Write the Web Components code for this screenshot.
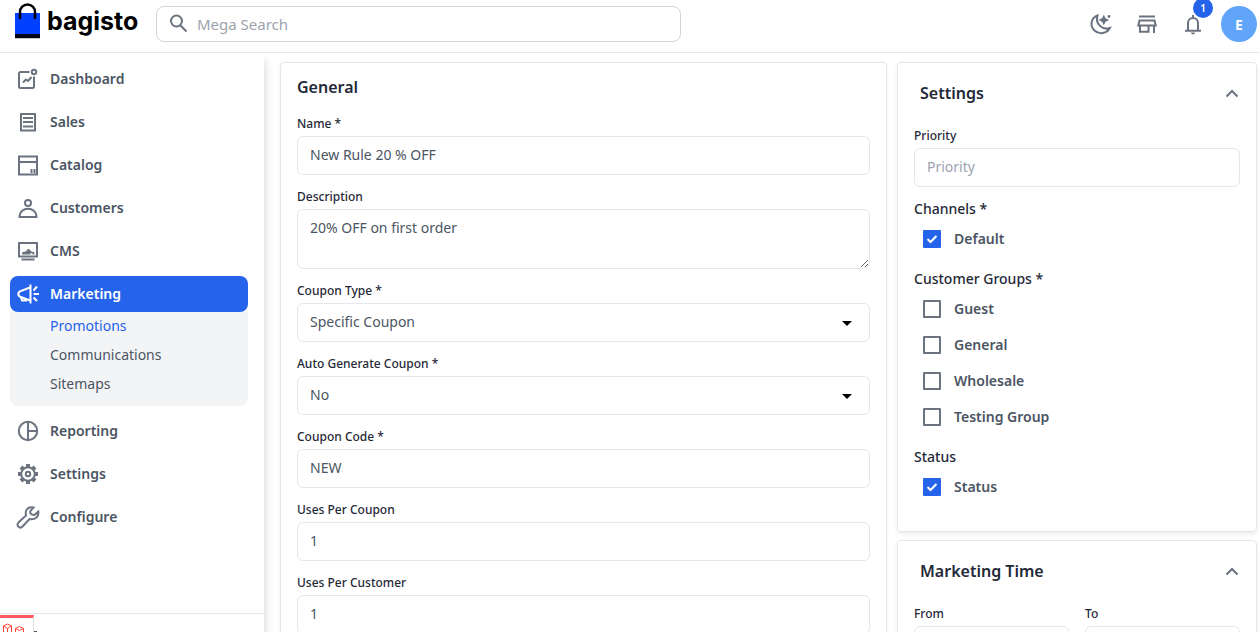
<!DOCTYPE html>
<html lang="en">
<head>
<meta charset="utf-8">
<title>Edit Cart Rule</title>
<style>
  html, body { margin: 0; height: 100%; }
  body { font-family: "Noto Sans", sans-serif; font-size: 14px; color: #4b5563; background: #fff; }
</style>
</head>
<body>
<admin-shell>
  <admin-header slot="header"></admin-header>
  <admin-sidebar slot="sidebar">
    <nav-item icon="dashboard">Dashboard</nav-item>
    <nav-item icon="sales">Sales</nav-item>
    <nav-item icon="catalog">Catalog</nav-item>
    <nav-item icon="customers">Customers</nav-item>
    <nav-item icon="cms">CMS</nav-item>
    <nav-item icon="marketing" active>Marketing
      <nav-sub slot="sub" active>Promotions</nav-sub>
      <nav-sub slot="sub">Communications</nav-sub>
      <nav-sub slot="sub">Sitemaps</nav-sub>
    </nav-item>
    <nav-item icon="reporting">Reporting</nav-item>
    <nav-item icon="settings">Settings</nav-item>
    <nav-item icon="configure">Configure</nav-item>
  </admin-sidebar>
  <form-card heading="General">
    <form-field label="Name *" value="New Rule 20 % OFF"></form-field>
    <form-field label="Description" kind="textarea" value="20% OFF on first order"></form-field>
    <form-field label="Coupon Type *" kind="select" options="Specific Coupon|No Coupon"></form-field>
    <form-field label="Auto Generate Coupon *" kind="select" options="No|Yes"></form-field>
    <form-field label="Coupon Code *" value="NEW"></form-field>
    <form-field label="Uses Per Coupon" value="1"></form-field>
    <form-field label="Uses Per Customer" value="1"></form-field>
  </form-card>
  <accordion-card slot="aside" heading="Settings">
    <form-field label="Priority" placeholder="Priority"></form-field>
    <check-group heading="Channels *"><check-row checked label="Default"></check-row></check-group>
    <check-group heading="Customer Groups *">
      <check-row label="Guest"></check-row>
      <check-row label="General"></check-row>
      <check-row label="Wholesale"></check-row>
      <check-row label="Testing Group"></check-row>
    </check-group>
    <check-group heading="Status"><check-row checked label="Status"></check-row></check-group>
  </accordion-card>
  <accordion-card slot="aside" heading="Marketing Time">
    <field-pair>
      <form-field label="From"></form-field>
      <form-field label="To"></form-field>
    </field-pair>
  </accordion-card>
  <debug-bar slot="overlay"></debug-bar>
</admin-shell>

<script>
const ICONS = {
  dashboard: '<path d="M13.500 5H4.500Q3 5 3 6.500V19.500Q3 21 4.500 21H16.500Q18 21 18 19.500V9.500"/><path d="M7 15.500l3-3 2 1.500 3.500-4"/><circle cx="18" cy="5" r="2.200"/>',
  sales: '<path d="M5 4h14v16.500H5zM7 8h10M7 12h10M7 16.500h10"/>',
  catalog: '<path d="M3 3.500h18v18H3zM3 9h18M15.500 16v4M18.500 16v4"/>',
  customers: '<circle cx="12" cy="7" r="3"/><path d="M3.500 21c0-11 17-11 17 0z"/>',
  cms: '<path d="M3 4h18v13.500H3zM5.500 20.500h13"/><path d="M6 15.500c0-2.500 1-3 2.500-2.500.5-1 1-1 2-.7 0-3 4-3 4 0 1-.3 1.500-.3 2 .7 1.500-.5 2 0 2 2.500h-2v-1.200h-2v1.200z" fill="currentColor" stroke="none"/>',
  marketing: '<path d="M14.500 2.500v19M14 5.500L3.500 9.500Q1 12 3.500 14.500L14 18.500M5 15.500L6 18.500H10V17.500M17.500 8.500l3.500-4M17.500 12H23M17.500 15.500l3.500 3.500"/>',
  reporting: '<circle cx="12" cy="12" r="9.200"/><path d="M12 3v18M12 12h9"/>',
  settings: '<circle cx="12" cy="12" r="6.800"/><circle cx="12" cy="12" r="2.200"/><path stroke-width="4" d="M12 2v3M12 19v3M2 12h3M19 12h3M5 5l2 2M17 17l2 2M19 5l-2 2M7 17l-2 2"/>',
  configure: '<path d="M17.500 2.500Q12 1 10 6Q9.500 8 10 10.500L2.500 17.500Q.5 20 2.500 21.800 4.500 23.500 6.500 21.500L13.500 14Q17.500 15 20.500 12.500 23 10 22.300 6.500L18.500 10Q16 10 14.500 8.500 14 7 14.500 5.800z"/>',
  search: '<circle cx="9.500" cy="9" r="5.500"/><path d="M13.500 13.500l6 6"/>',
  moon: '<path d="M8.500 3.500C1.500 6 .8 14 5.500 18.500S18 21.500 20.800 16C13.500 18.500 6 12 8.500 3.500z"/><path d="M14.800 5l1 2 2 1-2 1-1 2-1-2-2-1 2-1z" fill="currentColor"/><circle cx="20" cy="4.500" r="1.400" fill="currentColor" stroke="none"/>',
  store: '<path d="M4 4.500h16M4.500 8.500h15l1.200 5H3.300zM5 13.500v6.300h8.500v-6.300M19 13.500V21"/>',
  bell: '<path d="M7 18.500V11a5 5 0 0 1 10 0V18.500M4 18.800h16"/><path d="M12 3v2.500"/><path d="M10 20.500h4a2 2 0 0 1-4 0z" fill="currentColor" stroke="none"/>',
  up: '<path d="M6.500 15.500l5.500-5.500 5.500 5.500"/>'
};
const icon = (name, width = 2) => `<svg viewBox="0 0 24 24" width="24" height="24" fill="none" stroke="currentColor" stroke-width="${width}" aria-hidden="true">${ICONS[name]}</svg>`;
const BASE = '<style>*{box-sizing:border-box}svg{display:block;flex:none}a{color:inherit;text-decoration:none}button{font:inherit;color:inherit;background:none;border:0;padding:0;cursor:pointer}</style>';

function define(name, render) {
  customElements.define(name, class extends HTMLElement {
    connectedCallback() {
      if (!this.shadowRoot) this.attachShadow({ mode: 'open' }).innerHTML = BASE + render(this);
    }
  });
}

define('admin-shell', () => `
  <style>
    :host{display:flex;flex-direction:column;height:100vh;overflow:hidden}
    .body{display:flex;flex:1;min-height:0}
    main{flex:1;min-width:0;display:flex;align-items:flex-start;gap:10px;padding:9px 2px 9px 16px;overflow-y:auto;scrollbar-width:none}
    .main{flex:1;min-width:0}
    aside{flex:0 0 360px;display:flex;flex-direction:column;gap:8px}
  </style>
  <slot name="header"></slot>
  <div class="body"><slot name="sidebar"></slot>
    <main><div class="main"><slot></slot></div><aside><slot name="aside"></slot></aside></main>
  </div>
  <slot name="overlay"></slot>`);

define('admin-header', () => `
  <style>
    :host{display:block;border-bottom:1px solid #e5e7eb;color:#6b7280}
    header{display:flex;align-items:center;height:52px;padding:0 2px 4px 15px}
    .logo{display:flex;align-items:center;gap:7px;width:141px;padding-bottom:6px;color:#000;font:700 25px/32px Inter,sans-serif}
    .search{display:flex;align-items:center;gap:6px;width:525px;height:36px;border:1px solid #d1d5db;border-radius:8px;padding:0 10px}
    input{flex:1;min-width:0;border:0;outline:0;background:none;font:inherit;font-size:15px;color:#4b5563;padding:0}
    input::placeholder{color:#9ca3af;opacity:1}
    .tools{display:flex;gap:10px;margin-left:auto}
    .tools button{position:relative;display:flex;align-items:center;justify-content:center;width:36px;height:36px}
    .badge{position:absolute;right:-2px;top:-8px;width:20px;height:20px;border-radius:50%;background:#2563eb;color:#fff;font-size:10px;font-weight:600;line-height:20px;text-align:center}
    .tools .avatar{border-radius:50%;background:#60a5fa;color:#fff;font-weight:700}
  </style>
  <header>
    <a class="logo" href="#"><svg viewBox="0 0 25 36" width="25" height="36"><path fill="#0041ff" d="M0 10h25v21H0z"/><path fill="#020617" d="M0 31h25v4H0z"/><path fill="#c4c4c4" d="M0 35h25v1H0z"/><path d="M5 16V9a7.500 7.500 0 0 1 15 0v7" fill="none" stroke="#000" stroke-width="2.500"/></svg><span>bagisto</span></a>
    <label class="search">${icon('search')}<input type="text" placeholder="Mega Search" aria-label="Mega Search"></label>
    <div class="tools">
      <button aria-label="Dark mode">${icon('moon')}</button>
      <button aria-label="Visit shop">${icon('store')}</button>
      <button aria-label="Notifications">${icon('bell')}<span class="badge">1</span></button>
      <button class="avatar">E</button>
    </div>
  </header>`);

define('admin-sidebar', () => `
  <style>
    :host{display:flex;flex-direction:column;flex:0 0 264px;box-shadow:0 8px 10px rgba(0,0,0,.2);background:#fff}
    nav{flex:1;display:flex;flex-direction:column;gap:7px;padding:8px 16px 0 10px}
    footer{border-top:1px solid #e5e7eb;height:19px;padding:17px 0 0 32px;overflow:hidden}
    button{display:block;color:#475569}
  </style>
  <nav><slot></slot></nav>
  <footer><button aria-label="Collapse menu"><svg viewBox="0 0 6 12" width="6" height="12"><path d="M0 0h5v2H2v10H0z" fill="currentColor"/></svg></button></footer>`);

define('nav-item', el => `
  <style>
    :host{display:block}
    .top{display:flex;align-items:center;gap:10px;height:36px;padding:0 6px;border-radius:8px;font-weight:600;color:#4b5563}
    span{padding-bottom:2px}
    svg{color:#6b7280}
    :host([active]) .top{background:#2563eb;color:#fff}
    :host([active]) svg{color:#fff}
    :host([active]) .sub{padding-bottom:7px;background:#f3f4f6;border-radius:0 0 8px 8px}
  </style>
  <a class="top" href="#">${icon(el.getAttribute('icon'))}<span><slot></slot></span></a>
  <div class="sub"><slot name="sub"></slot></div>`);

define('nav-sub', () => `
  <style>
    :host{display:block;padding:0 0 2px 40px;line-height:27px}
    :host([active]){color:#2563eb}
  </style>
  <a href="#"><slot></slot></a>`);

define('form-card', el => `
  <style>
    :host{display:block;border:1px solid #e5e7eb;border-radius:4px;padding:12px 16px;box-shadow:0 1px 3px rgba(0,0,0,.08)}
    h2{margin:0 0 16px;font-size:16px;line-height:24px;font-weight:600;color:#1f2937}
    .fields{display:flex;flex-direction:column;gap:13px}
  </style>
  <h2>${el.getAttribute('heading')}</h2><div class="fields"><slot></slot></div>`);

define('accordion-card', el => `
  <style>
    :host{display:block;border:1px solid #e5e7eb;border-radius:4px;padding:18px 16px 26px;box-shadow:0 2px 4px rgba(0,0,0,.08)}
    header{display:flex;align-items:center;justify-content:space-between;padding-left:6px;margin-bottom:22px;height:24px}
    h2{margin:0;font-size:16px;line-height:24px;font-weight:600;color:#1f2937}
    button{width:24px;height:24px;margin-right:-4px;color:#6b7280}
    .fields{display:flex;flex-direction:column;gap:10px}
  </style>
  <header><h2>${el.getAttribute('heading')}</h2><button aria-label="Toggle">${icon('up')}</button></header>
  <div class="fields"><slot></slot></div>`);

define('field-pair', () => `
  <style>:host{display:grid;grid-template-columns:1fr 1fr;gap:16px}</style><slot></slot>`);

define('form-field', el => {
  const kind = el.getAttribute('kind');
  const value = el.getAttribute('value') || '';
  const control = kind === 'textarea'
    ? `<textarea id="c">${value}</textarea>`
    : kind === 'select'
    ? `<div class="select"><select id="c">${el.getAttribute('options').split('|').map(o => `<option>${o}</option>`).join('')}</select><svg viewBox="0 0 10 5" width="10" height="5"><path d="M0 0h10L5 5z"/></svg></div>`
    : `<input id="c" type="text" value="${value}" placeholder="${el.getAttribute('placeholder') || ''}">`;
  return `
  <style>
    :host{display:block;min-width:0}
    label{display:block;font-size:12px;line-height:18px;margin-bottom:3px;font-weight:500;color:#1f2937}
    input,textarea,select{display:block;width:100%;height:39px;border:1px solid #e5e7eb;border-radius:6px;background:#fff;padding:0 12px 2px;font:inherit;color:#4b5563;outline:0;appearance:none}
    textarea{height:60px;padding:8px 12px;line-height:20px;resize:vertical}
    input::placeholder{color:#9ca3af;opacity:1}
    .select{position:relative}
    .select svg{position:absolute;right:18px;top:18px;pointer-events:none}
  </style>
  <label for="c">${el.getAttribute('label')}</label>${control}`;
});

define('check-group', el => `
  <style>
    :host{display:block}
    h3{margin:0;font-size:14px;line-height:24px;font-weight:500;color:#1f2937}
  </style>
  <h3>${el.getAttribute('heading')}</h3><slot></slot>`);

define('check-row', el => `
  <style>
    :host{display:block}
    label{display:flex;align-items:center;gap:13px;height:36px;padding-left:9px;font-weight:600;color:#4b5563}
    .text{padding-bottom:2px}
    .box{display:grid;width:18px;height:18px}
    .box>*{grid-area:1/1}
    input{appearance:none;margin:0;width:18px;height:18px;border:2px solid #6b7280;border-radius:1px}
    input:checked{background:#2563eb;border-color:#2563eb}
    svg{display:none;pointer-events:none}
    input:checked+svg{display:block}
  </style>
  <label><span class="box"><input type="checkbox"${el.hasAttribute('checked') ? ' checked' : ''}><svg viewBox="0 0 18 18" width="18" height="18" fill="none" stroke="#fff" stroke-width="2"><path d="M4.500 9l3 3 6-6"/></svg></span><span class="text">${el.getAttribute('label')}</span></label>`);

define('debug-bar', () => `
  <style>
    :host{display:block;position:fixed;left:0;bottom:0}
    button{display:block;width:34px;height:17px;border-top:3px solid #ff5a5f;border-right:1px solid #ddd;background:#fff;overflow:hidden}
  </style>
  <button aria-label="Open debug bar"><svg viewBox="0 0 33 14" width="33" height="14" fill="none" stroke="#ff4433" stroke-width="1"><path d="M3.500 8L7.500 6l4 2v6M3.500 8v6M3.500 8l4 2.500 4-2.500M7.500 10.500V14M15.500 10.500l4-2 4 2-4 2zM15.500 10.500V14M23.500 10.500V14"/></svg></button>`);
</script>
</body>
</html>
